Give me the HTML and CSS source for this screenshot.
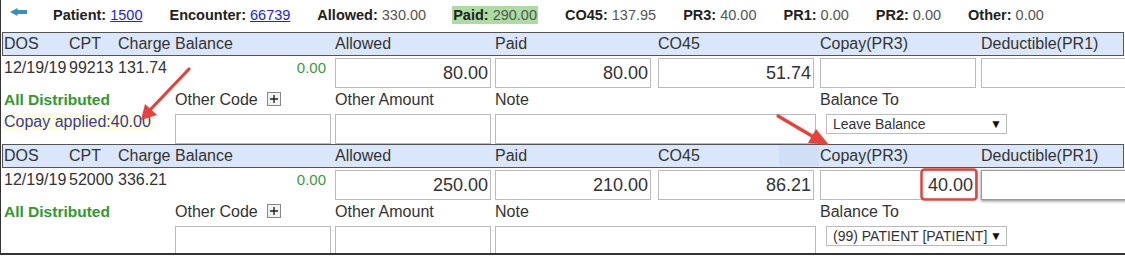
FILE: index.html
```html
<!DOCTYPE html>
<html lang="en">
<head>
    <meta charset="UTF-8">
    <title>Posting - Distribution</title>
    <link rel="stylesheet" href="styles.css">
</head>
<body>
    <div class="frame">
        <div class="topbar">
            <svg class="back-icon" width="17" height="8" viewBox="0 0 17 8">
                <polygon points="0,4 7.5,0 7.5,8" fill="#3a8cc8"/>
                <rect x="7" y="2" width="10" height="4" fill="#3a8cc8"/>
            </svg>
            <div class="summary">
                <span class="item"><b>Patient:</b> <a href="#">1500</a></span>
                <span class="item"><b>Encounter:</b> <a href="#">66739</a></span>
                <span class="item"><b>Allowed:</b> 330.00</span>
                <span class="item paid"><b>Paid:</b> 290.00</span>
                <span class="item"><b>CO45:</b> 137.95</span>
                <span class="item"><b>PR3:</b> 40.00</span>
                <span class="item"><b>PR1:</b> 0.00</span>
                <span class="item"><b>PR2:</b> 0.00</span>
                <span class="item"><b>Other:</b> 0.00</span>
            </div>
        </div>

        <div class="record">
            <div class="rec-head">
                <span>DOS</span><span>CPT</span><span>Charge</span><span>Balance</span>
                <span>Allowed</span><span>Paid</span><span>CO45</span>
                <span>Copay(PR3)</span><span>Deductible(PR1)</span>
            </div>
            <div class="rec-row amounts">
                <span class="txt">12/19/19</span><span class="txt">99213</span><span class="txt">131.74</span>
                <span class="txt bal">0.00</span>
                <span><input type="text" value="80.00"></span>
                <span><input type="text" value="80.00"></span>
                <span><input type="text" value="51.74"></span>
                <span><input type="text" value=""></span>
                <span><input type="text" value="" class="long"></span>
            </div>
            <div class="rec-row labels">
                <span class="status span3">All Distributed</span>
                <span>Other Code <svg class="plus-icon" width="14" height="14" viewBox="0 0 14 14"><rect x="0.5" y="0.5" width="13" height="13" fill="#f2f2f2" stroke="#888"/><path d="M3 7h8M7 3v8" stroke="#222" stroke-width="1.4"/></svg></span>
                <span>Other Amount</span>
                <span class="span2">Note</span>
                <span class="span2">Balance To</span>
            </div>
            <div class="rec-row extras">
                <span class="span3"><span class="copay-note">Copay applied:40.00</span></span>
                <span><input type="text" value=""></span>
                <span><input type="text" value=""></span>
                <span class="span2"><input type="text" value="" class="note"></span>
                <span class="span2"><div class="select"><span>Leave Balance</span><span class="caret">&#9660;</span></div></span>
            </div>
        </div>

        <div class="record">
            <div class="rec-head">
                <span>DOS</span><span>CPT</span><span>Charge</span><span>Balance</span>
                <span>Allowed</span><span>Paid</span><span>CO45</span>
                <span>Copay(PR3)</span><span>Deductible(PR1)</span>
            </div>
            <div class="rec-row amounts">
                <span class="txt">12/19/19</span><span class="txt">52000</span><span class="txt">336.21</span>
                <span class="txt bal">0.00</span>
                <span><input type="text" value="250.00"></span>
                <span><input type="text" value="210.00"></span>
                <span><input type="text" value="86.21"></span>
                <span><input type="text" value="40.00"></span>
                <span><input type="text" value="" class="long focused"></span>
            </div>
            <div class="rec-row labels">
                <span class="status span3">All Distributed</span>
                <span>Other Code <svg class="plus-icon" width="14" height="14" viewBox="0 0 14 14"><rect x="0.5" y="0.5" width="13" height="13" fill="#f2f2f2" stroke="#888"/><path d="M3 7h8M7 3v8" stroke="#222" stroke-width="1.4"/></svg></span>
                <span>Other Amount</span>
                <span class="span2">Note</span>
                <span class="span2">Balance To</span>
            </div>
            <div class="rec-row extras">
                <span class="span3"></span>
                <span><input type="text" value=""></span>
                <span><input type="text" value=""></span>
                <span class="span2"><input type="text" value="" class="note"></span>
                <span class="span2"><div class="select"><span>(99) PATIENT [PATIENT]</span><span class="caret">&#9660;</span></div></span>
            </div>
        </div>

        <!-- annotation marks over the screenshot -->
        <svg class="marks" width="1125" height="256" viewBox="0 0 1125 256">
            <rect x="779" y="145" width="40" height="21" fill="#d0dff6"/>
            <line x1="189" y1="69" x2="150" y2="110" stroke="#e8403a" stroke-width="3.2" stroke-linecap="round"/>
            <polygon points="141,120 145,104 157,115" fill="#e8403a"/>
            <line x1="778" y1="116" x2="812" y2="136" stroke="#e8403a" stroke-width="3.2" stroke-linecap="round"/>
            <polygon points="829,145 808,143 816,129" fill="#e8403a"/>
            <rect x="921.5" y="169.5" width="55" height="30" rx="3" fill="none" stroke="#e8403a" stroke-width="2.5"/>
        </svg>
    </div>
</body>
</html>
```

FILE: styles.css
```css
body {
    margin: 0;
    font-family: "Liberation Sans", Arial, sans-serif;
    color: #333;
}
.frame {
    position: relative;
    height: 255px;
    box-sizing: border-box;
    border-left: 1px solid #333;
    border-bottom: 2px solid #333;
    overflow: hidden;
}
.topbar {
    display: flex;
    align-items: flex-start;
    height: 32px;
    box-sizing: border-box;
    padding: 8px 0 0 9px;
}
.back-icon {
    display: block;
}
.summary {
    display: flex;
    gap: 27px;
    margin-left: 26px;
    margin-top: -2px;
    font-size: 14.5px;
    line-height: 18px;
    color: #555;
}
.summary b {
    color: #222;
}
.summary a {
    color: #2222ee;
}
.summary .paid {
    background-color: #acdca2;
    padding: 0 1px;
    margin-left: -1px;
}
.record {
    margin-left: 1px;
}
.rec-head,
.rec-row {
    display: grid;
    grid-template-columns: 65px 49px 57px 160px 160px 163px 162px 161px 1fr;
}
.rec-head {
    height: 24px;
    box-sizing: border-box;
    margin-right: 1px;
    padding-top: 2px;
    border: 1px solid #555;
    background-color: #dae6f9;
    font-size: 16px;
    line-height: 18px;
}
.rec-head span,
.rec-row > span {
    padding-left: 1px;
    white-space: nowrap;
}
.rec-row {
    padding-left: 1px;
    font-size: 16px;
}
.amounts {
    height: 34px;
}
.amounts .txt {
    padding-top: 3px;
    line-height: 18px;
}
.amounts .bal {
    text-align: right;
    padding-right: 8px;
    font-size: 15px;
    color: #3c9a3c;
}
.labels {
    height: 23px;
    padding-top: 1px;
    box-sizing: border-box;
    line-height: 18px;
}
.labels .status {
    font-weight: bold;
    font-size: 15.5px;
    color: #2f9a2f;
}
.plus-icon {
    vertical-align: -1px;
    margin-left: 5px;
}
.span2 {
    grid-column: span 2;
}
.span3 {
    grid-column: span 3;
}
.extras {
    height: 31px;
}
.copay-note {
    display: inline-block;
    line-height: 18px;
    padding-right: 2px;
    margin-left: -1px;
    padding-left: 1px;
    background-color: #fdfde4;
    color: #3b3b8e;
}
input {
    display: block;
    box-sizing: border-box;
    width: 156px;
    height: 30px;
    margin: 2px 0 0 0;
    padding: 0 2px;
    border: 1px solid #bbb;
    font-family: "Liberation Sans", Arial, sans-serif;
    font-size: 18px;
    color: #333;
    text-align: right;
    background: #fff;
}
.extras input {
    margin-top: 1px;
}
input.long {
    width: 160px;
}
input.note {
    width: 321px;
}
input.focused {
    border-color: #999;
    box-shadow: 0 1px 3px rgba(0, 0, 0, 0.5);
}
.select {
    display: flex;
    justify-content: space-between;
    align-items: center;
    box-sizing: border-box;
    width: 181px;
    height: 20px;
    margin: 1px 0 0 6px;
    padding: 0 4px 0 6px;
    border: 1px solid #bbb;
    background: #fff;
    font-size: 14px;
    color: #333;
}
.select .caret {
    font-size: 12px;
    color: #111;
}
.marks {
    position: absolute;
    left: -1px;
    top: 0;
    pointer-events: none;
}
```
